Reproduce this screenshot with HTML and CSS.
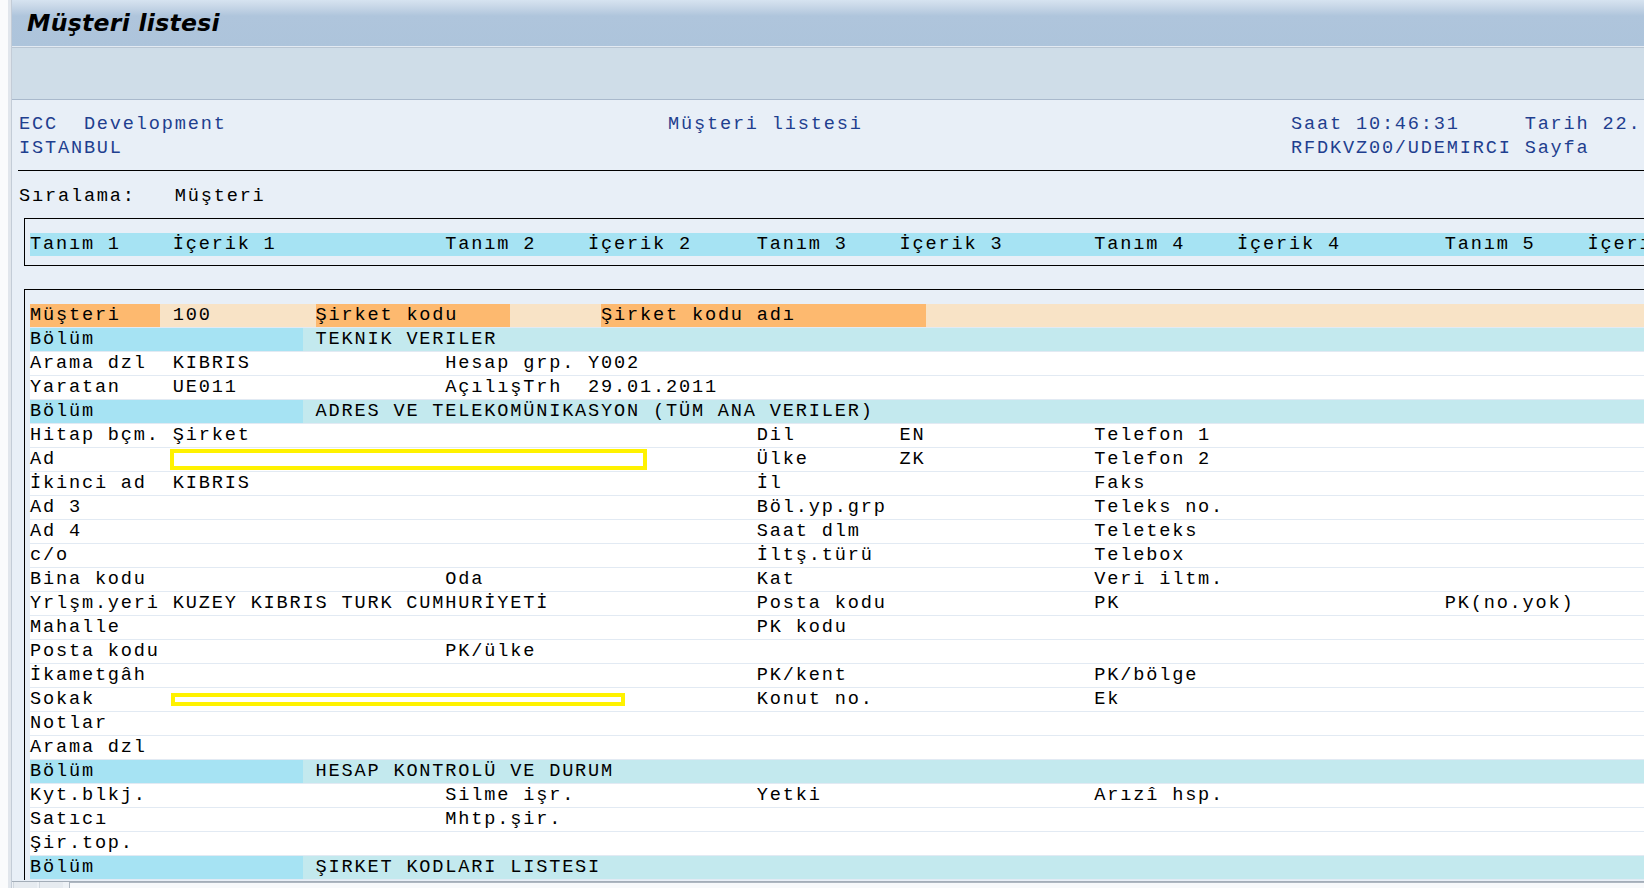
FILE: index.html
```html
<!DOCTYPE html>
<html lang="tr">
<head>
<meta charset="utf-8">
<title>Müşteri listesi</title>
<link rel="stylesheet" href="styles.css">
</head>
<body>
<div class="app">
  <div class="leftstrip"></div>
  <div class="main">
    <header class="titlebar"><h1>Müşteri listesi</h1></header>
    <div class="toolbar"></div>
    <div class="content">
      <div class="listhead">
        <div class="hl"><span>ECC  Development</span><span>Müşteri listesi</span><span>Saat 10:46:31</span><span>Tarih 22.</span></div>
        <div class="hl"><span>ISTANBUL</span><span></span><span>RFDKVZ00/UDEMIRCI</span><span>Sayfa</span></div>
      </div>
      <div class="rule"></div>
      <div class="sort"><span class="sortlbl">Sıralama:</span><span>Müşteri</span></div>

      <div class="box headbox">
        <div class="g band">
          <span class="k1">Tanım 1</span><span class="k2">İçerik 1</span><span class="k3">Tanım 2</span><span class="k4">İçerik 2</span><span class="k5">Tanım 3</span><span class="k6">İçerik 3</span><span class="k7">Tanım 4</span><span class="k8">İçerik 4</span><span class="k9">Tanım 5</span><span class="k10">İçerik 5</span>
        </div>
      </div>

      <div class="box databox">
        <div class="row keyrow"><span class="kc w10">Müşteri</span><span class="kv w12">100</span><span class="kc w15">Şirket kodu</span><span class="w7"></span><span class="kc w25">Şirket kodu adı</span></div>
        <div class="row secrow"><span class="seclbl">Bölüm</span><span class="sectxt">TEKNIK VERILER</span></div>
        <div class="row g"><span class="k1">Arama dzl</span><span class="k2">KIBRIS</span><span class="k3">Hesap grp.</span><span class="k4">Y002</span></div>
        <div class="row g"><span class="k1">Yaratan</span><span class="k2">UE011</span><span class="k3">AçılışTrh</span><span class="k4">29.01.2011</span></div>
        <div class="row secrow"><span class="seclbl">Bölüm</span><span class="sectxt">ADRES VE TELEKOMÜNIKASYON (TÜM ANA VERILER)</span></div>
        <div class="row g"><span class="k1">Hitap bçm.</span><span class="k2">Şirket</span><span class="k5">Dil</span><span class="k6">EN</span><span class="k7">Telefon 1</span></div>
        <div class="row g"><span class="k1">Ad</span><span class="k5">Ülke</span><span class="k6">ZK</span><span class="k7">Telefon 2</span><span class="mask mask-ad"></span></div>
        <div class="row g"><span class="k1">İkinci ad</span><span class="k2">KIBRIS</span><span class="k5">İl</span><span class="k7">Faks</span></div>
        <div class="row g"><span class="k1">Ad 3</span><span class="k5">Böl.yp.grp</span><span class="k7">Teleks no.</span></div>
        <div class="row g"><span class="k1">Ad 4</span><span class="k5">Saat dlm</span><span class="k7">Teleteks</span></div>
        <div class="row g"><span class="k1">c/o</span><span class="k5">İltş.türü</span><span class="k7">Telebox</span></div>
        <div class="row g"><span class="k1">Bina kodu</span><span class="k3">Oda</span><span class="k5">Kat</span><span class="k7">Veri iltm.</span></div>
        <div class="row g"><span class="k1">Yrlşm.yeri</span><span class="k2">KUZEY KIBRIS TURK CUMHURİYETİ</span><span class="k5">Posta kodu</span><span class="k7">PK</span><span class="k9">PK(no.yok)</span></div>
        <div class="row g"><span class="k1">Mahalle</span><span class="k5">PK kodu</span></div>
        <div class="row g"><span class="k1">Posta kodu</span><span class="k3">PK/ülke</span></div>
        <div class="row g"><span class="k1">İkametgâh</span><span class="k5">PK/kent</span><span class="k7">PK/bölge</span></div>
        <div class="row g"><span class="k1">Sokak</span><span class="k5">Konut no.</span><span class="k7">Ek</span><span class="mask mask-sokak"></span></div>
        <div class="row g"><span class="k1">Notlar</span></div>
        <div class="row g"><span class="k1">Arama dzl</span></div>
        <div class="row secrow"><span class="seclbl">Bölüm</span><span class="sectxt">HESAP KONTROLÜ VE DURUM</span></div>
        <div class="row g"><span class="k1">Kyt.blkj.</span><span class="k3">Silme işr.</span><span class="k5">Yetki</span><span class="k7">Arızî hsp.</span></div>
        <div class="row g"><span class="k1">Satıcı</span><span class="k3">Mhtp.şir.</span></div>
        <div class="row g"><span class="k1">Şir.top.</span></div>
        <div class="row secrow"><span class="seclbl">Bölüm</span><span class="sectxt">ŞIRKET KODLARI LISTESI</span></div>
      </div>
    </div>
    <div class="hscroll"><div class="sbtn"></div><div class="sbtn"></div><div class="strack"></div></div>
  </div>
</div>
</body>
</html>
```

FILE: styles.css
```css
* { box-sizing: border-box; }
html, body { margin: 0; padding: 0; }
:root { --cw: 12.98px; }
body {
  width: 1644px;
  height: 888px;
  overflow: hidden;
  background: #e8eff7;
  font-family: "Liberation Mono", "Courier New", monospace;
  font-size: 18.6px;
  letter-spacing: 1.82px;
}
.app { display: flex; height: 888px; }
.leftstrip {
  flex: 0 0 11px;
  background: linear-gradient(to right, #fafbfc 0, #fafbfc 8px, #e1e6ec 8px, #e1e6ec 11px);
}
.main {
  flex: 1 1 auto;
  min-width: 0;
  display: flex;
  flex-direction: column;
  border-left: 1px solid #c3ccd7;
  overflow: hidden;
}
.titlebar {
  flex: 0 0 47px;
  background: linear-gradient(to bottom, #d6e3f0 0, #c9d8e8 6px, #afc5dc 16px, #adc4db 100%);
  padding-left: 15px;
  border-bottom: 1px solid #e3eaf2;
}
.titlebar h1 {
  margin: 0;
  font-family: "DejaVu Sans", "Liberation Sans", sans-serif;
  font-weight: bold;
  font-style: italic;
  font-size: 23.5px;
  line-height: 46px;
  letter-spacing: 0.3px;
  color: #000;
}
.toolbar {
  flex: 0 0 53px;
  background: #cfdde8;
  border-top: 1px solid #b9c6d3;
  border-bottom: 1px solid #a9b9cc;
}
.content {
  flex: 1 1 auto;
  min-height: 0;
  overflow: hidden;
  background: #e8eff7;
  padding-top: 13px;
}
.listhead { padding-left: 7px; color: #1f3f8f; }
.hl {
  display: grid;
  grid-template-columns: calc(50 * var(--cw)) calc(48 * var(--cw)) calc(18 * var(--cw)) 1fr;
  height: 24px;
  line-height: 24px;
  white-space: pre;
}
.rule {
  margin: 9px 0 0 6px;
  height: 1px;
  background: #000;
}
.sort {
  margin-top: 14px;
  padding-left: 7px;
  height: 24px;
  line-height: 24px;
  color: #000;
  display: flex;
}
.sortlbl { width: calc(12 * var(--cw)); }
.box {
  margin-left: 12px;
  border: 1px solid #000;
  border-right: none;
  padding-left: 5px;
}
.headbox {
  margin-top: 9px;
  padding-top: 14px;
  padding-bottom: 9px;
}
.band {
  background: #a6e3f3;
  height: 23px;
  line-height: 24px;
}
.databox {
  margin-top: 23px;
  padding-top: 14px;
  border-bottom: none;
}
.g {
  display: grid;
  grid-template-columns:
    calc(11 * var(--cw)) calc(21 * var(--cw)) calc(11 * var(--cw)) calc(13 * var(--cw))
    calc(11 * var(--cw)) calc(15 * var(--cw)) calc(11 * var(--cw)) calc(16 * var(--cw))
    calc(11 * var(--cw)) 1fr;
  white-space: pre;
  color: #000;
}
.g > span { grid-row: 1; white-space: pre; }
.k1 { grid-column: 1; }
.k2 { grid-column: 2; }
.k3 { grid-column: 3; }
.k4 { grid-column: 4; }
.k5 { grid-column: 5; }
.k6 { grid-column: 6; }
.k7 { grid-column: 7; }
.k8 { grid-column: 8; }
.k9 { grid-column: 9; }
.k10 { grid-column: 10; }
.row {
  position: relative;
  height: 24px;
  line-height: 24px;
  background: #fff;
  border-bottom: 1px solid #e2eaf3;
  white-space: pre;
}
.keyrow { display: flex; background: #f8e3c6; }
.kc { background: #fdb96f; height: 23px; }
.kv { padding-left: var(--cw); }
.w10 { width: calc(10 * var(--cw)); }
.w12 { width: calc(12 * var(--cw)); }
.w15 { width: calc(15 * var(--cw)); }
.w7 { width: calc(7 * var(--cw)); }
.w25 { width: calc(25 * var(--cw)); }
.secrow { display: flex; background: #c3e9ee; }
.seclbl { width: calc(21 * var(--cw)); background: #a6e3f3; height: 23px; }
.sectxt { padding-left: var(--cw); }
.mask {
  position: absolute;
  border: 4px solid #fff200;
  background: #fff;
}
.mask-ad { left: 140px; top: 1px; width: 477px; height: 21px; }
.mask-sokak { left: 141px; top: 5px; width: 454px; height: 13px; }
.hscroll {
  flex: 0 0 7px;
  display: flex;
  gap: 2px;
  padding-left: 1px;
  background: #eef2f6;
  border-top: 1px solid #a3adb8;
}
.sbtn { width: 24px; background: #e6ebf0; border-left: 1px solid #d0d7de; }
.strack { flex: 1; margin-left: 4px; background: #f7f9fb; border-left: 1px solid #aeb7c1; border-top: 1px solid #aeb7c1; }
```
